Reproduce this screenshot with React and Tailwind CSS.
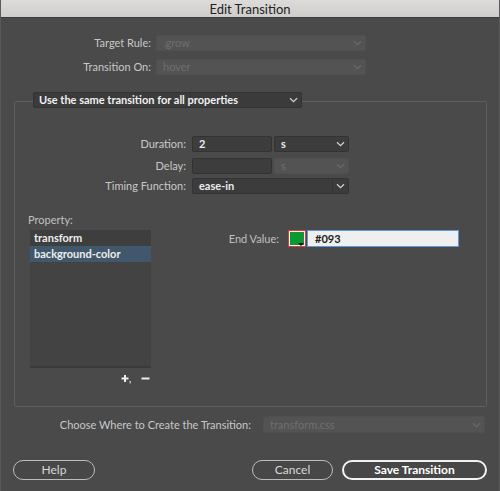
import React from "react";

const Chevron = ({ className = "" }) => (
  <svg width="9" height="6" viewBox="0 0 9 6" className={className}>
    <path d="M1 1.2 L4.5 4.6 L8 1.2" fill="none" stroke="currentColor" strokeWidth="1.3" />
  </svg>
);

const Select = ({ value, w, disabled, divider, className = "" }) => (
  <div
    className={`flex h-[16px] items-center rounded-[2px] border ${
      disabled ? "border-[#505050] bg-[#535353] text-[#6f6f6f]" : "border-[#333] bg-[#3c3c3c] text-[#ececec]"
    } ${w} ${className}`}
  >
    <span className="flex-1 whitespace-nowrap pl-[6px]">{value}</span>
    {divider && <div className="h-full w-px bg-[#333]" />}
    <div className={`flex w-[15px] justify-center ${disabled ? "text-[#6a6a6a]" : "text-[#d0d0d0]"}`}>
      <Chevron />
    </div>
  </div>
);

const Btn = ({ children, w, primary }) => (
  <button
    className={`flex h-[20px] items-center justify-center rounded-full ${w} ${
      primary ? "border-2 border-[#f2f2f2] font-bold text-white" : "border border-[#bdbdbd] text-[#d8d8d8]"
    } bg-[#474747] text-[12px]`}
  >
    {children}
  </button>
);

export default function App() {
  return (
    <div
      className="flex h-[491px] w-[500px] flex-col border-x border-[#5a5a5a] bg-[#4a4a4a] text-[11px] leading-[16px] text-[#c8c8c8]"
      style={{ fontFamily: "Lato, 'Open Sans', sans-serif" }}
    >
      <div className="flex h-[18px] shrink-0 items-center justify-center border-b border-[#3a3a3a] bg-gradient-to-b from-[#dedbdb] to-[#cfcccc] text-[13px] text-[#222]">
        Edit Transition
      </div>

      <div className="mt-[17px] flex items-center">
        <div className="w-[155px] pr-[5px] text-right">Target Rule:</div>
        <Select value=".grow" w="w-[210px]" disabled />
      </div>
      <div className="mt-[8px] flex items-center">
        <div className="w-[155px] pr-[5px] text-right">Transition On:</div>
        <Select value="hover" w="w-[210px]" disabled />
      </div>

      <div className="ml-[13px] mt-[26px] h-[306px] w-[473px] rounded-[2px] border border-[#5e5e5e]">
        <div className="-mt-[10px] ml-[18px] flex h-[16px] w-[269px] items-center rounded-[2px] border border-[#333] bg-[#3b3b3b] font-bold text-[#f0f0f0]">
          <span className="flex-1 whitespace-nowrap pl-[5px]">Use the same transition for all properties</span>
          <div className="flex w-[16px] justify-center text-[#d0d0d0]">
            <Chevron />
          </div>
        </div>

        <div className="mt-[28px] flex items-center">
          <div className="w-[177px] pr-[6px] text-right">Duration:</div>
          <div className="flex h-[16px] w-[80px] items-center rounded-[2px] border border-[#333] bg-[#3d3d3d] pl-[6px] font-bold text-[#eee]">
            2
          </div>
          <Select value="s" w="w-[75px]" className="ml-[2px] font-bold" />
        </div>
        <div className="mt-[6px] flex items-center">
          <div className="w-[177px] pr-[6px] text-right">Delay:</div>
          <div className="h-[16px] w-[80px] rounded-[2px] border border-[#333] bg-[#3d3d3d]" />
          <Select value="s" w="w-[75px]" className="ml-[2px]" disabled />
        </div>
        <div className="mt-[4px] flex items-center">
          <div className="w-[177px] pr-[6px] text-right">Timing Function:</div>
          <Select value="ease-in" w="w-[157px]" divider className="font-bold" />
        </div>

        <div className="mt-[18px] flex">
          <div className="ml-[13px] flex w-[123px] flex-col">
            <div className="text-[#c0c0c0]">Property:</div>
            <div className="ml-[2px] mt-[2px] flex h-[138px] w-[121px] flex-col border-b-2 border-[#3a3a3a] bg-[#434343] font-bold text-[#eee]">
              <div className="flex h-[16px] items-center bg-[#3e3e3e] pl-[4px]">transform</div>
              <div className="flex h-[16px] items-center bg-[#41576b] pl-[4px]">background-color</div>
            </div>
            <div className="mt-[6px] flex justify-end gap-[8px] pr-[1px] text-[#eee]">
              <svg width="12" height="10" viewBox="0 0 12 10">
                <path d="M4 1 V8 M0.5 4.5 H7.5" stroke="#eee" strokeWidth="2" />
                <path d="M8.5 7.5 L9.5 7.5 L9 9.5" stroke="#ddd" strokeWidth="1" fill="none" />
              </svg>
              <svg width="9" height="10" viewBox="0 0 9 10">
                <path d="M0.5 4.5 H8.5" stroke="#eee" strokeWidth="2" />
              </svg>
            </div>
          </div>
          <div className="mt-[18px] flex h-[17px] items-center">
            <div className="w-[137px] pr-[9px] text-right text-[#c0c0c0]">End Value:</div>
            <div className="relative flex h-[17px] w-[18px] items-center justify-center border border-[#e23b3b] bg-[#f2f2f2]">
              <div className="h-[13px] w-[14px] bg-[#0a9933]" />
              <div className="absolute bottom-[0px] right-[1px] h-0 w-0 border-x-[3px] border-t-[3px] border-x-transparent border-t-[#111]" />
            </div>
            <div className="ml-[1px] flex h-[17px] w-[152px] items-center border border-[#5b9ade] bg-[#efefef] pl-[7px] font-bold text-[#222]">
              #093
            </div>
          </div>
        </div>
      </div>

      <div className="mt-[9px] flex items-center">
        <div className="w-[250px] text-right">Choose Where to Create the Transition:</div>
        <Select value="transform.css" w="w-[222px]" className="ml-[12px] h-[17px]" disabled />
      </div>

      <div className="mt-[27px] flex items-center">
        <div className="ml-[12px]">
          <Btn w="w-[82px]">Help</Btn>
        </div>
        <div className="ml-[157px]">
          <Btn w="w-[81px]">Cancel</Btn>
        </div>
        <div className="ml-[9px]">
          <Btn w="w-[145px]" primary>
            Save Transition
          </Btn>
        </div>
      </div>
    </div>
  );
}
